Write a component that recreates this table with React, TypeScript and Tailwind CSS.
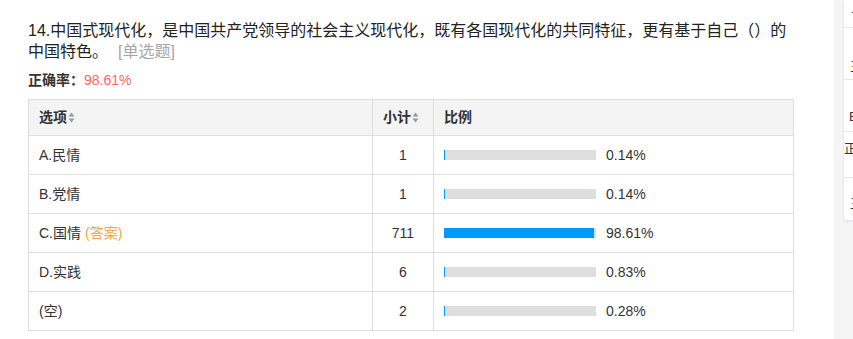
import React from 'react';

interface OptionRow {
  label: string;
  count: number;
  percent: number;
  isAnswer?: boolean;
}

const rows: OptionRow[] = [
  { label: 'A.民情', count: 1, percent: 0.14 },
  { label: 'B.党情', count: 1, percent: 0.14 },
  { label: 'C.国情', count: 711, percent: 98.61, isAnswer: true },
  { label: 'D.实践', count: 6, percent: 0.83 },
  { label: '(空)', count: 2, percent: 0.28 },
];

const BAR_WIDTH = 152;

function SortIcon() {
  return (
    <svg width="7" height="11" viewBox="0 0 7 11" className="ml-[1px] inline-block">
      <path d="M3.5 0.5 L6.5 4.5 L0.5 4.5 Z" fill="#999" />
      <path d="M3.5 10.5 L6.5 6.5 L0.5 6.5 Z" fill="#999" />
    </svg>
  );
}

function SidePanel() {
  // clipped side menu on the right edge of the page
  const items = [
    { h: 'h-[28px]', text: '十', cls: 'items-center pl-[7px]' },
    { h: 'h-[52px]', text: '三', cls: 'items-end pb-[4px] pl-[6px]' },
    { h: 'h-[52px]', text: 'B', cls: 'items-end pb-[6px] pl-[5px]' },
    { h: 'h-[46px]', text: '正', cls: 'items-start pt-[9px] pl-[0px]' },
    { h: 'h-[42px]', text: '三', cls: 'items-end pb-[8px] pl-[6px]' },
  ];
  return (
    <div className="w-[19px] shrink-0 bg-[#f5f5f5] h-[339px]">
      <div className="ml-[10px] w-[9px] bg-white rounded-bl-[3px] shadow-[0_1px_3px_rgba(0,0,0,0.12)] overflow-hidden">
        {items.map((item, i) => (
          <div
            key={i}
            className={`flex ${item.h} ${item.cls} ${i < items.length - 1 ? 'border-b border-[#e6e6e6]' : ''} text-[13px] leading-[16px] text-[#333] whitespace-nowrap`}
          >
            {item.text}
          </div>
        ))}
      </div>
    </div>
  );
}

export default function App() {
  return (
    <div
      className="flex w-[853px] h-[339px] bg-white overflow-hidden text-[#333]"
      style={{ fontFamily: '"Liberation Sans", "Noto Sans CJK SC", sans-serif' }}
    >
      <div className="flex-1 pl-[28px] pt-[20px]">
        <div className="text-[16px] leading-[21px] w-[770px] text-[#222]">
          14.中国式现代化，是中国共产党领导的社会主义现代化，既有各国现代化的共同特征，更有基于自己（）的中国特色。
          <span className="ml-[10px] text-[#a6a6a6]">[单选题]</span>
        </div>

        <div className="mt-[9px] text-[14px] leading-[18px]">
          <span className="font-bold">正确率：</span>
          <span className="text-[#f66]">98.61%</span>
        </div>

        <div className="mt-[10px] w-[766px] border-l border-r border-t border-[#dddddd] text-[14px]">
          <div className="flex h-[36px] bg-[#f4f4f4] border-b border-[#dddddd] font-bold">
            <div className="w-[343px] flex items-center px-[10px]">
              选项<SortIcon />
            </div>
            <div className="w-[61px] flex items-center px-[10px] border-l border-[#dddddd]">
              小计<SortIcon />
            </div>
            <div className="flex-1 flex items-center px-[10px] border-l border-[#dddddd]">比例</div>
          </div>

          {rows.map((row) => {
            const fill = Math.max(1, Math.round((row.percent / 100) * BAR_WIDTH));
            return (
              <div key={row.label} className="flex h-[39px] border-b border-[#dddddd]">
                <div className="w-[343px] flex items-center px-[10px]">
                  {row.label}
                  {row.isAnswer && <span className="ml-[4px] text-[#f5a445]">(答案)</span>}
                </div>
                <div className="w-[61px] flex items-center justify-center border-l border-[#dddddd]">
                  {row.count}
                </div>
                <div className="flex-1 flex items-center px-[10px] border-l border-[#dddddd]">
                  <div className="w-[152px] h-[10px] bg-[#dedede]">
                    <div className="h-full bg-[#0099ff]" style={{ width: fill }} />
                  </div>
                  <span className="ml-[10px]">{row.percent.toFixed(2)}%</span>
                </div>
              </div>
            );
          })}
        </div>
      </div>
      <SidePanel />
    </div>
  );
}
